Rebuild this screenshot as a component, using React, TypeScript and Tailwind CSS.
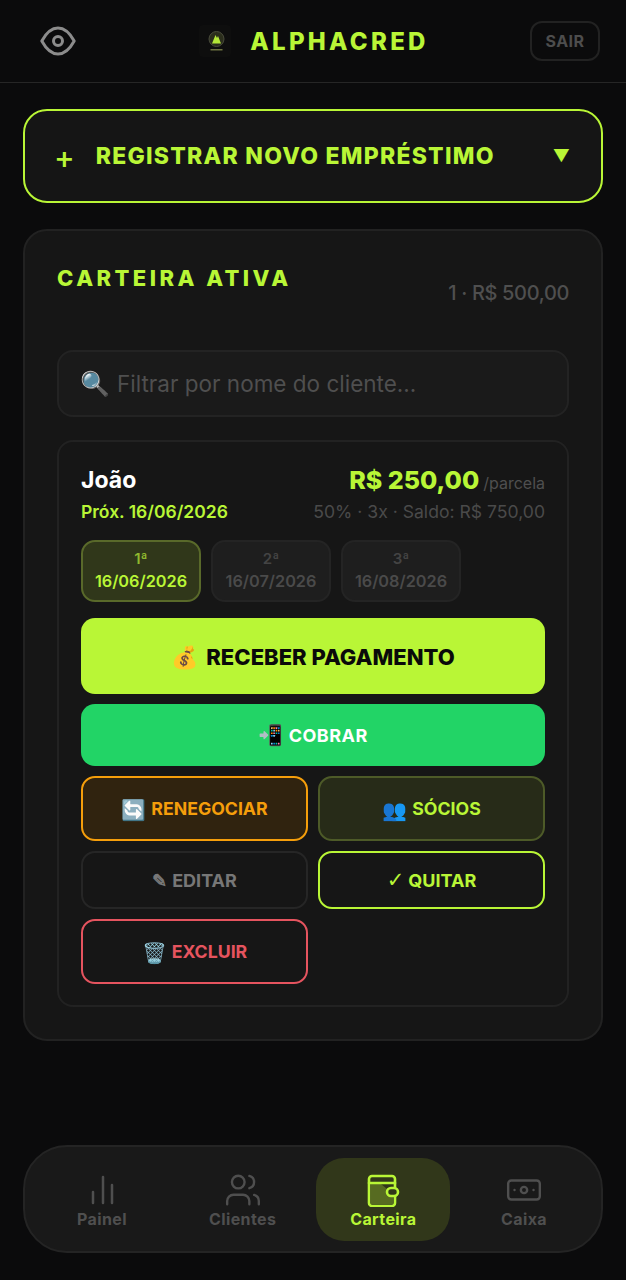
import React from 'react';
import { Users, Banknote } from 'lucide-react';

const chips = [
  { n: '1ª', date: '16/06/2026', active: true },
  { n: '2ª', date: '16/07/2026', active: false },
  { n: '3ª', date: '16/08/2026', active: false },
];

const EyeIcon = () => (
  <svg width="36" height="30" viewBox="0 0 36 30" fill="none" stroke="#8c8c8c" strokeWidth="3">
    <path d="M1.8 15C7 5.5 12 2 18 2s11 3.500 16.200 13C29 24.500 24 28 18 28S7 24.500 1.800 15Z" strokeLinejoin="round" />
    <circle cx="18" cy="15" r="4.5" />
  </svg>
);

const Logo = () => (
  <svg width="32" height="32" viewBox="0 0 32 32">
    <rect width="32" height="32" rx="4" fill="#0e0e0e" />
    <circle cx="17.500" cy="14" r="7.500" fill="#2b2e1c" stroke="#4a4c3c" />
    <path d="M13 18.500 16.500 10l1.500 3 1-2 3 7.500Z" fill="#b4e838" />
    <rect x="11.500" y="24" width="12" height="1.500" fill="#6d7240" />
  </svg>
);

const BarsIcon = () => (
  <svg width="38" height="38" viewBox="0 0 38 38" fill="none" stroke="currentColor" strokeWidth="2.500" strokeLinecap="round">
    <path d="M10 21v11M20 6v26M29 14v18" />
  </svg>
);

const WalletIcon = () => (
  <svg width="34" height="34" viewBox="0 0 34 34" fill="none" stroke="currentColor" strokeWidth="2.600" strokeLinejoin="round" strokeLinecap="round">
    <path d="M5 11h10l12 10v10H5Z" fill="#b9f636" fillOpacity="0.28" stroke="none" />
    <path d="M29 15v-9a3 3 0 0 0-3-3H6a3 3 0 0 0-3 3v24a3 3 0 0 0 3 3h20a3 3 0 0 0 3-3v-7" />
    <path d="M3 10h26" />
    <rect x="21" y="15" width="11" height="8" rx="4" fill="#31371a" />
  </svg>
);

const tabs = [
  { label: 'Painel', icon: <BarsIcon /> },
  { label: 'Clientes', icon: <Users size={38} strokeWidth={1.5} /> },
  { label: 'Carteira', icon: <WalletIcon />, active: true },
  { label: 'Caixa', icon: <Banknote size={38} strokeWidth={1.5} /> },
];

const App: React.FC = () => {
  return (
    <div className="flex h-[1280px] w-[626px] flex-col overflow-hidden bg-[#0b0b0c] font-['Inter',sans-serif]">
      {/* Header */}
      <header className="flex h-[83px] shrink-0 items-center justify-between border-b border-[#262626] pl-[40px] pr-[26px]">
        <EyeIcon />
        <div className="ml-[22px] flex items-center gap-[19px]">
          <Logo />
          <span className="mt-[1px] text-[24px] font-extrabold tracking-[3.300px] text-[#b9f636]">ALPHACRED</span>
        </div>
        <button className="flex h-[40px] w-[70px] items-center justify-center rounded-[12px] border-2 border-[#222222] text-[16px] font-bold tracking-[0.4px] text-[#4d4d4d]">
          SAIR
        </button>
      </header>

      <main className="flex flex-col gap-[26px] px-[23px] pt-[26px]">
        {/* Registrar */}
        <button className="flex h-[94px] items-center justify-between rounded-[24px] border-2 border-[#b9f636] bg-[#151515] pl-[29px] pr-[31px] text-[#b9f636]">
          <span className="flex items-center gap-[21px]">
            <span className="text-[31px] font-medium leading-none">+</span>
            <span className="mt-[1px] text-[23px] font-extrabold tracking-[1.250px]">REGISTRAR NOVO EMPRÉSTIMO</span>
          </span>
          <span className="text-[17px] leading-none">▼</span>
        </button>

        {/* Carteira */}
        <section className="flex flex-col rounded-[24px] border-2 border-[#222222] bg-[#161616] px-[32px] pb-[32px] pt-[33px]">
          <div className="flex items-start justify-between">
            <h2 className="text-[22px] font-extrabold leading-[28px] tracking-[3.450px] text-[#b9f636]">CARTEIRA ATIVA</h2>
            <span className="mt-[15px] text-[20px] font-medium leading-[28px] tracking-[-0.350px] text-[#4f4f4f]">1 · R$ 500,00</span>
          </div>

          <div className="mt-[43px] flex h-[67px] items-center gap-[7px] rounded-[16px] border-2 border-[#232323] bg-[#1a1a1a] px-[21px] text-[22.500px] text-[#4f4f4f]">
            <span className="text-[24px] leading-none">🔍</span>
            <span className="mt-[1px]">Filtrar por nome do cliente...</span>
          </div>

          <div className="mt-[23px] flex flex-col rounded-[16px] border-2 border-[#222222] bg-[#161616] px-[22px] pb-[21px] pt-[21px]">
            <div className="flex items-start justify-between">
              <div>
                <div className="text-[23px] font-bold leading-[34px] text-white">João</div>
                <div className="mt-[1px] text-[17.500px] font-semibold leading-[28px] text-[#b9f636]">Próx. 16/06/2026</div>
              </div>
              <div className="flex flex-col items-end">
                <div className="flex items-baseline gap-[4px] leading-[34px]">
                  <span className="text-[25px] font-extrabold text-[#b9f636]">R$ 250,00</span>
                  <span className="text-[16px] text-[#4f4f4f]">/parcela</span>
                </div>
                <div className="mt-[-2px] text-[17.600px] leading-[28px] text-[#4a4a4a]">50% · 3x · Saldo: R$ 750,00</div>
              </div>
            </div>

            <div className="mt-[14px] flex gap-[10px]">
              {chips.map((c) => (
                <div
                  key={c.n}
                  className={`flex h-[62px] w-[120px] flex-col items-center justify-center rounded-[14px] border-2 font-semibold ${
                    c.active
                      ? 'border-[#59692a] bg-[#30371a] text-[#b9f636]'
                      : 'border-[#242424] bg-[#1e1e1e] text-[#4a4a4a]'
                  }`}
                >
                  <span className={`text-[15px] leading-[20px] ${c.active ? 'text-[#8fb82e]' : 'text-[#444444]'}`}>{c.n}</span>
                  <span className="text-[16.300px] leading-[24px]">{c.date}</span>
                </div>
              ))}
            </div>

            <button className="mt-[16px] flex h-[76px] items-center justify-center gap-[8px] rounded-[14px] bg-[#b9f636] pt-[2px] text-[22px] font-extrabold text-[#0a0a0a]">
              <span>💰</span>
              <span>RECEBER PAGAMENTO</span>
            </button>
            <button className="mt-[10px] flex h-[62px] items-center justify-center gap-[5px] rounded-[14px] bg-[#22d466] text-[18px] font-bold tracking-[0.5px] text-white">
              <span className="text-[20px]">📲</span>
              <span>COBRAR</span>
            </button>

            <div className="mt-[10px] grid grid-cols-2 gap-[10px]">
              <button className="flex h-[65px] items-center justify-center gap-[5px] rounded-[14px] border-2 border-[#f59e0b] bg-[#30230f] pt-[2px] text-[17.700px] font-bold text-[#f59e0b]">
                <span className="text-[20px]">🔄</span>
                <span>RENEGOCIAR</span>
              </button>
              <button className="flex h-[65px] items-center justify-center gap-[5px] rounded-[14px] border-2 border-[#4d5a28] bg-[#272b18] pt-[2px] text-[17.700px] font-bold text-[#b9f636]">
                <span className="text-[20px]">👥</span>
                <span>SÓCIOS</span>
              </button>
              <button className="flex h-[58px] items-center justify-center gap-[5px] rounded-[14px] border-2 border-[#262626] text-[18px] font-bold text-[#777777]">
                <span>✎</span>
                <span>EDITAR</span>
              </button>
              <button className="flex h-[58px] items-center justify-center gap-[4px] rounded-[14px] border-2 border-[#b9f636] text-[18px] font-bold text-[#b9f636]">
                <span className="font-['DejaVu_Sans'] text-[21px] leading-none">✓</span>
                <span>QUITAR</span>
              </button>
              <button className="flex h-[65px] items-center justify-center gap-[5px] rounded-[14px] border-2 border-[#e5545f] pt-[2px] text-[17.700px] font-bold text-[#e5545f]">
                <span className="text-[20px]">🗑️</span>
                <span>EXCLUIR</span>
              </button>
            </div>
          </div>
        </section>
      </main>

      {/* Bottom nav */}
      <nav className="mx-[23px] mb-[27px] mt-auto flex h-[108px] shrink-0 items-center justify-between rounded-[44px] border-2 border-[#242424] bg-[#191919] px-[10px]">
        {tabs.map((t) => (
          <div
            key={t.label}
            className={`flex h-[83px] w-[134px] flex-col items-center justify-center rounded-[28px] pt-[2px] ${
              t.active ? 'bg-[#31371a] text-[#b9f636]' : 'text-[#4f4f4f]'
            }`}
          >
            <div className="flex h-[38px] items-center justify-center">{t.icon}</div>
            <span className="text-[16px] font-bold leading-[20px] tracking-[0.4px]">{t.label}</span>
          </div>
        ))}
      </nav>
    </div>
  );
};

export default App;
